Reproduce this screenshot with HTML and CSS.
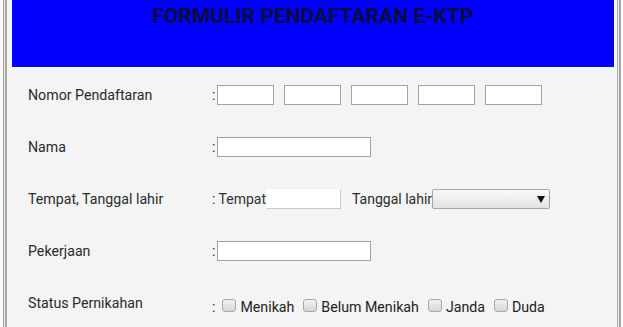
FILE: index.html
```html
<!DOCTYPE html>
<html lang="id">
<head>
<meta charset="utf-8">
<title>Formulir Pendaftaran E-KTP</title>
<link rel="stylesheet" href="styles.css">
</head>
<body>
<div class="frame">
  <div class="inner">
    <header class="banner"><h1 class="title">FORMULIR PENDAFTARAN E-KTP</h1></header>
    <form class="form">
      <div class="row">
        <label class="label">Nomor Pendaftaran</label>
        <div class="value">
          <span class="colon">:</span>
          <div class="nomor">
            <input class="box short" type="text">
            <input class="box short" type="text">
            <input class="box short" type="text">
            <input class="box short" type="text">
            <input class="box short" type="text">
          </div>
        </div>
      </div>
      <div class="row">
        <label class="label">Nama</label>
        <div class="value">
          <span class="colon">:</span>
          <input class="box long" type="text">
        </div>
      </div>
      <div class="row">
        <label class="label">Tempat, Tanggal lahir</label>
        <div class="value">
          <span class="colon tight">: Tempat</span>
          <input class="box place" type="text">
          <span class="tgl">Tanggal lahir</span>
          <span class="select-wrap">
            <select class="select"><option></option></select>
            <svg class="arrow" width="8" height="7" viewBox="0 0 8 7"><path d="M0 0H8L4 7Z" fill="#111"/></svg>
          </span>
        </div>
      </div>
      <div class="row">
        <label class="label">Pekerjaan</label>
        <div class="value">
          <span class="colon">:</span>
          <input class="box long" type="text">
        </div>
      </div>
      <div class="row">
        <label class="label">Status Pernikahan</label>
        <div class="value status">
          <span class="colon wide">:</span>
          <label class="opt"><input class="check" type="checkbox">Menikah</label>
          <label class="opt"><input class="check" type="checkbox">Belum Menikah</label>
          <label class="opt"><input class="check" type="checkbox">Janda</label>
          <label class="opt"><input class="check" type="checkbox">Duda</label>
        </div>
      </div>
    </form>
  </div>
</div>
</body>
</html>
```

FILE: styles.css
```css
html, body {
  margin: 0;
  padding: 0;
  background: #fbfbfb;
  overflow: hidden;
}
body {
  font-family: Roboto, "Liberation Sans", Arial, sans-serif;
  color: #2a2a2a;
}
.frame {
  margin-left: 3px;
  width: 618px;
  box-sizing: border-box;
  border-left: 1px solid #9c9c9c;
  border-right: 2px solid #a4a4a4;
  padding: 0 1px;
  background: #efefef;
  height: 340px;
}
.inner {
  height: 100%;
  box-sizing: border-box;
  border-left: 2px solid #a8a8a8;
  border-right: 1px solid #a8a8a8;
  padding: 0 3px 0 5px;
  background: #f4f4f4;
}
.banner {
  background: #0000fc;
  height: 67px;
  display: flex;
  justify-content: center;
}
.title {
  margin: 0;
  padding-top: 4px;
  font-size: 21px;
  font-weight: 700;
  color: #0c0c3c;
  line-height: 25px;
}
.form {
  padding: 2px 0 0 16px;
}
.row {
  height: 52px;
  display: grid;
  grid-template-columns: 184px 1fr;
  align-items: center;
}
.label {
  font-size: 14.2px;
}
.value {
  display: flex;
  align-items: center;
  font-size: 14px;
}
.colon {
  margin-right: 2px;
  color: #333;
}
.colon.tight {
  margin-right: 0;
}
.colon.wide {
  margin-right: 7px;
}
.nomor {
  display: flex;
  gap: 10px;
}
.box {
  box-sizing: border-box;
  height: 20px;
  margin: 0;
  padding: 0 2px;
  border: 1px solid #a3a3a3;
  background: #fff;
  font: inherit;
}
.short { width: 57px; }
.long { width: 154px; }
.place {
  width: 75px;
  border-color: #fff #c8c8c8 #c8c8c8 #fff;
}
.tgl {
  margin-left: 11px;
}
.select-wrap {
  position: relative;
  display: inline-flex;
}
.select {
  appearance: none;
  -webkit-appearance: none;
  width: 118px;
  height: 20px;
  margin: 0;
  box-sizing: border-box;
  border: 1px solid #a6a6a6;
  border-radius: 2px;
  background: linear-gradient(#f9f9f9, #e3e3e3);
}
.arrow {
  position: absolute;
  left: 105px;
  top: 7px;
}
.status {
  font-size: 14.2px;
  padding-top: 7px;
}
.opt {
  display: inline-flex;
  align-items: center;
  margin-right: 9px;
  color: #222;
}
.check {
  appearance: none;
  -webkit-appearance: none;
  width: 14px;
  height: 13px;
  margin: 0 4px 2px 0;
  box-sizing: border-box;
  border: 1px solid #a8a8a8;
  border-radius: 3px;
  background: linear-gradient(#f2f2f2, #d6d6d6);
}
```
